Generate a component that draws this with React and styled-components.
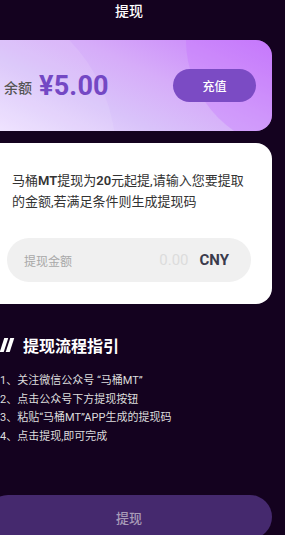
import React from "react";
import styled, { createGlobalStyle } from "styled-components";

const GlobalStyle = createGlobalStyle`
  html, body {
    margin: 0;
    padding: 0;
    background: #14021f;
    overflow: hidden;
  }
  body {
    font-family: Roboto, "Noto Sans CJK SC", sans-serif;
  }
`;

const Page = styled.div`
  width: 286px;
  margin-left: -14px;
  height: 535px;
  display: flex;
  flex-direction: column;
`;

const NavTitle = styled.div`
  height: 22px;
  line-height: 22px;
  text-align: center;
  color: #fff;
  font-size: 14px;
  font-weight: 500;
`;

const BalanceCard = styled.div`
  position: relative;
  overflow: hidden;
  margin-top: 18px;
  height: 91px;
  border-radius: 16px;
  background: linear-gradient(25deg, #efe3ff 0%, #d9c3fa 35%, #d6acf9 60%, #c77cfb 100%);
  display: flex;
  align-items: center;
  justify-content: space-between;
  padding: 0 16px 0 18px;
  box-sizing: border-box;

  &::before {
    content: "";
    position: absolute;
    left: -200px;
    top: -50px;
    width: 330px;
    height: 330px;
    border-radius: 50%;
    background: rgba(255, 255, 255, 0.1);
  }
  &::after {
    content: "";
    position: absolute;
    left: 200px;
    top: -110px;
    width: 220px;
    height: 220px;
    border-radius: 50%;
    background: rgba(196, 110, 255, 0.3);
  }
`;

const Balance = styled.div`
  position: relative;
  z-index: 1;
  display: flex;
  align-items: center;
  gap: 7px;
`;

const BalanceLabel = styled.span`
  font-size: 14px;
  color: #555;
  font-weight: 500;
  padding-top: 2px;
`;

const BalanceValue = styled.span`
  font-size: 27px;
  font-weight: 700;
  color: #7448c4;
  letter-spacing: 0.2px;
`;

const RechargeButton = styled.button`
  position: relative;
  z-index: 1;
  width: 83px;
  height: 33px;
  border: none;
  border-radius: 17px;
  background: #7b4bc4;
  color: #fff;
  font-family: inherit;
  font-size: 12px;
  font-weight: 500;
`;

const FormCard = styled.div`
  margin-top: 12px;
  height: 161px;
  border-radius: 16px;
  background: #fff;
  padding: 27px 21px 0 21px;
  box-sizing: border-box;
`;

const Notice = styled.p`
  margin: 0 0 0 5px;
  font-size: 13px;
  line-height: 21px;
  color: #333;
`;

const Strong = styled.span`
  font-weight: 600;
`;

const AmountField = styled.div`
  margin-top: 26px;
  height: 44px;
  border-radius: 22px;
  background: #f0f0f0;
  display: flex;
  align-items: center;
  padding: 0 22px 0 17px;
`;

const FieldLabel = styled.span`
  font-size: 12px;
  color: #a8a8a8;
  flex: 1;
`;

const FieldValue = styled.span`
  font-size: 15px;
  color: #dcdcdc;
  margin-right: 11px;
`;

const Currency = styled.span`
  font-size: 15px;
  font-weight: 700;
  color: #3a3b4c;
`;

const Guide = styled.div`
  padding: 0 14px;
  margin-top: 30px;
`;

const GuideTitle = styled.h3`
  margin: 0;
  display: flex;
  align-items: center;
  gap: 8px;
  color: #fff;
  font-size: 16px;
  font-weight: 700;
  height: 22px;
`;

const Slashes = styled.span`
  display: flex;
  gap: 2px;
  width: 13px;
  padding-left: 2px;

  &::before,
  &::after {
    content: "";
    width: 4px;
    height: 14px;
    background: #fff;
    transform: skewX(-18deg);
  }
`;

const Steps = styled.ol`
  list-style: none;
  margin: 16px 0 0 0;
  padding: 0;
`;

const Step = styled.li`
  font-size: 11px;
  line-height: 18.7px;
  color: #ddd;
`;

const SubmitButton = styled.button`
  margin-top: auto;
  margin-bottom: -4px;
  height: 44px;
  border: none;
  border-radius: 22px;
  background: #45296e;
  color: #a89bb8;
  font-family: inherit;
  font-size: 13px;
  font-weight: 500;
`;

const steps = [
  "1、关注微信公众号 “马桶MT”",
  "2、点击公众号下方提现按钮",
  "3、粘贴“马桶MT”APP生成的提现码",
  "4、点击提现,即可完成",
];

export default function App() {
  return (
    <>
      <GlobalStyle />
      <Page>
        <NavTitle>提现</NavTitle>
        <BalanceCard>
          <Balance>
            <BalanceLabel>余额</BalanceLabel>
            <BalanceValue>¥5.00</BalanceValue>
          </Balance>
          <RechargeButton>充值</RechargeButton>
        </BalanceCard>
        <FormCard>
          <Notice>
            马桶<Strong>MT</Strong>提现为<Strong>20</Strong>元起提,请输入您要提取的金额,若满足条件则生成提现码
          </Notice>
          <AmountField>
            <FieldLabel>提现金额</FieldLabel>
            <FieldValue>0.00</FieldValue>
            <Currency>CNY</Currency>
          </AmountField>
        </FormCard>
        <Guide>
          <GuideTitle>
            <Slashes />
            提现流程指引
          </GuideTitle>
          <Steps>
            {steps.map((s) => (
              <Step key={s}>{s}</Step>
            ))}
          </Steps>
        </Guide>
        <SubmitButton>提现</SubmitButton>
      </Page>
    </>
  );
}
